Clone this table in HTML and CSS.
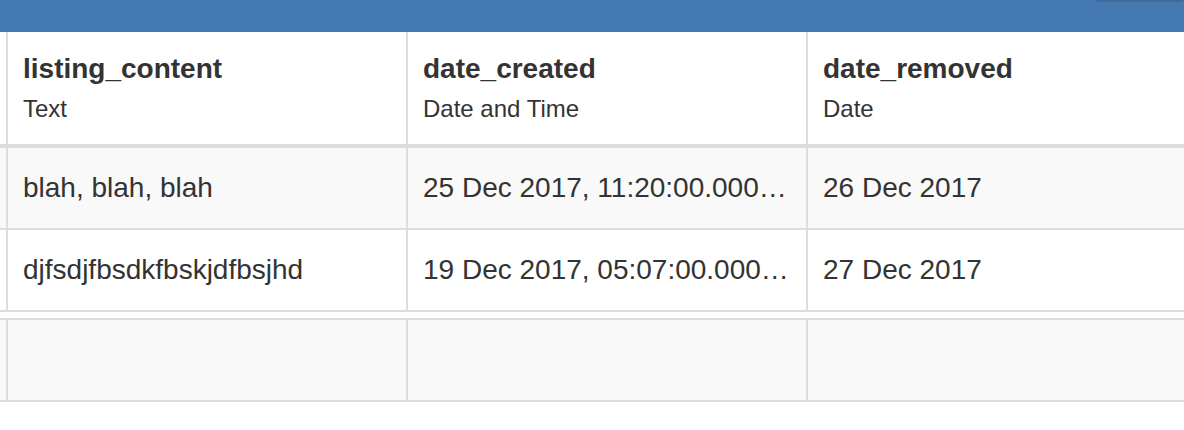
FILE: index.html
```html
<!DOCTYPE html>
<html lang="en">
<head>
<meta charset="utf-8">
<title>Table</title>
<link rel="stylesheet" href="styles.css">
</head>
<body>
<div class="topbar"><div class="topbar-edge"></div></div>
<div class="table">
  <div class="row head">
    <div class="cell stub"></div>
    <div class="cell"><div class="col-name">listing_content</div><div class="col-type">Text</div></div>
    <div class="cell"><div class="col-name">date_created</div><div class="col-type">Date and Time</div></div>
    <div class="cell"><div class="col-name">date_removed</div><div class="col-type">Date</div></div>
  </div>
  <div class="row body striped">
    <div class="cell stub"></div>
    <div class="cell">blah, blah, blah</div>
    <div class="cell">25 Dec 2017, 11:20:00.000…</div>
    <div class="cell">26 Dec 2017</div>
  </div>
  <div class="row body">
    <div class="cell stub"></div>
    <div class="cell">djfsdjfbsdkfbskjdfbsjhd</div>
    <div class="cell">19 Dec 2017, 05:07:00.000…</div>
    <div class="cell">27 Dec 2017</div>
  </div>
</div>
<div class="table new-row">
  <div class="row body striped">
    <div class="cell stub"></div>
    <div class="cell"></div>
    <div class="cell"></div>
    <div class="cell"></div>
  </div>
</div>
</body>
</html>
```

FILE: styles.css
```css
html, body {
  margin: 0;
  padding: 0;
  background: #ffffff;
  overflow: hidden;
}

body {
  font-family: "Liberation Sans", Arial, Helvetica, sans-serif;
  color: #333333;
  width: 1184px;
}

.topbar {
  position: relative;
  height: 32px;
  background: #4479b1;
}

.topbar-edge {
  position: absolute;
  top: 0;
  right: 1px;
  width: 87px;
  height: 2px;
  background: #41699a;
}

.table {
  width: 1206px;
}

.row {
  display: grid;
  grid-template-columns: 6px 400px 400px 400px;
}

.cell {
  border-left: 2px solid #dddddd;
  padding: 0 16px 0 15px;
  min-width: 0;
}

.cell.stub {
  border-left: none;
  padding: 0;
}

.head {
  background: #ffffff;
  border-bottom: 4px solid #dddddd;
}

.head .cell {
  padding-top: 17px;
  padding-bottom: 17px;
}

.col-name {
  font-weight: bold;
  font-size: 28px;
  line-height: 40px;
}

.col-type {
  font-size: 24px;
  line-height: 36px;
  padding-top: 2px;
}

.body {
  border-bottom: 2px solid #dddddd;
  background: #ffffff;
}

.body .cell {
  font-size: 28px;
  line-height: 40px;
  padding-top: 20px;
  padding-bottom: 20px;
  height: 40px;
  white-space: nowrap;
  overflow: hidden;
  text-overflow: ellipsis;
}

.body.striped {
  background: #f9f9f9;
}

.new-row {
  margin-top: 6px;
  border-top: 2px solid #dddddd;
}
```
